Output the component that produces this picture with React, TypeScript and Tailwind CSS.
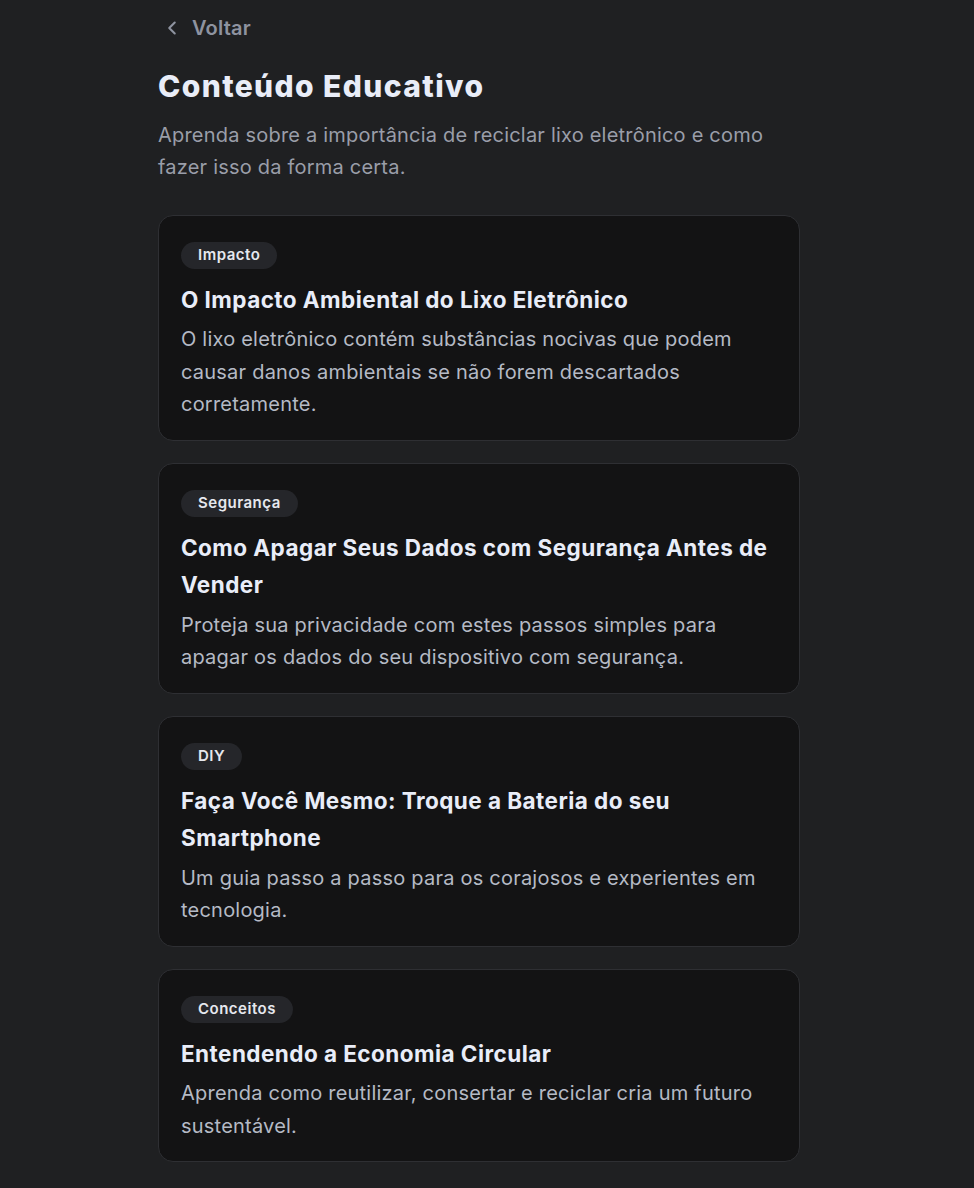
import { ChevronLeft } from "lucide-react";

interface Article {
  tag: string;
  title: string;
  text: string;
}

// Lista de artigos exibidos na página.
const articles: Article[] = [
  {
    tag: "Impacto",
    title: "O Impacto Ambiental do Lixo Eletrônico",
    text: "O lixo eletrônico contém substâncias nocivas que podem causar danos ambientais se não forem descartados corretamente.",
  },
  {
    tag: "Segurança",
    title: "Como Apagar Seus Dados com Segurança Antes de Vender",
    text: "Proteja sua privacidade com estes passos simples para apagar os dados do seu dispositivo com segurança.",
  },
  {
    tag: "DIY",
    title: "Faça Você Mesmo: Troque a Bateria do seu Smartphone",
    text: "Um guia passo a passo para os corajosos e experientes em tecnologia.",
  },
  {
    tag: "Conceitos",
    title: "Entendendo a Economia Circular",
    text: "Aprenda como reutilizar, consertar e reciclar cria um futuro sustentável.",
  },
];

function ArticleCard({ article }: { article: Article }) {
  return (
    <div className="w-full bg-[#131314] border border-[#2e2f33] rounded-[15px] pt-[26px] pb-[19px] px-[22px]">
      <span className="inline-flex items-center h-[27px] px-[17px] rounded-full bg-[#25262a] text-[#e6e8ee] text-[15px] font-semibold tracking-[0.5px]">
        {article.tag}
      </span>
      <h2 className="mt-[12px] text-[22.5px] leading-[37.5px] font-bold tracking-[0.45px] text-[#e9edf8]">
        {article.title}
      </h2>
      <p className="mt-[5px] text-[20px] leading-[32.5px] tracking-[0.22px] text-[#b5bac5]">
        {article.text}
      </p>
    </div>
  );
}

export default function App() {
  return (
    <div
      className="min-h-[1188px] bg-[#1f2022] flex justify-center pr-[16px]"
      style={{ fontFamily: "Inter, 'Noto Sans', sans-serif" }}
    >
      <div className="w-[642px] pb-[30px]">
        <button className="flex items-center gap-[9px] h-[56px] pl-[3px] text-[#8e93a0] text-[20px] font-semibold tracking-[0.2px]">
          <ChevronLeft className="w-[22px] h-[22px]" strokeWidth={2.25} />
          Voltar
        </button>

        <h1 className="mt-[12px] text-[30px] leading-[37.5px] font-extrabold tracking-[1.4px] text-[#e9edf8]">
          Conteúdo Educativo
        </h1>
        <p className="mt-[13px] text-[20px] leading-[32.5px] tracking-[0.21px] text-[#9a9ea9] pr-[20px]">
          Aprenda sobre a importância de reciclar lixo eletrônico e como fazer
          isso da forma certa.
        </p>

        <div className="mt-[31px] flex flex-col gap-[22px]">
          {articles.map((article) => (
            <ArticleCard key={article.tag} article={article} />
          ))}
        </div>
      </div>
    </div>
  );
}
